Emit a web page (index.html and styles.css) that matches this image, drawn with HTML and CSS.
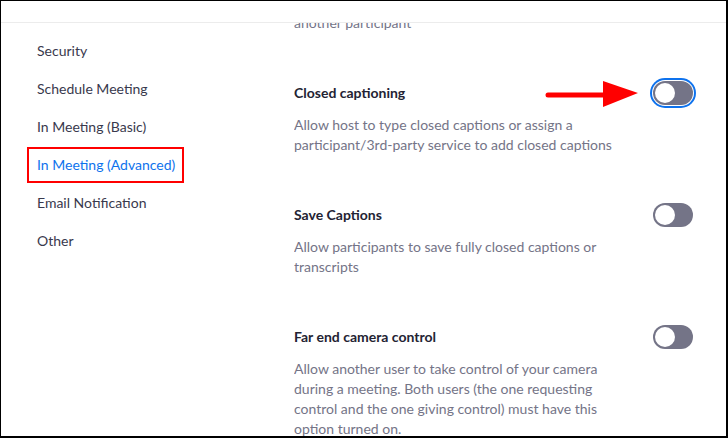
FILE: index.html
```html
<!DOCTYPE html>
<html lang="en">
<head>
<meta charset="utf-8">
<title>Settings</title>
<link rel="stylesheet" href="styles.css">
</head>
<body>
<div class="frame">
  <div class="topbar"></div>
  <div class="layout">
    <nav class="sidebar">
      <a class="nav-item">Security</a>
      <a class="nav-item">Schedule Meeting</a>
      <a class="nav-item">In Meeting (Basic)</a>
      <a class="nav-item active">In Meeting (Advanced)</a>
      <a class="nav-item">Email Notification</a>
      <a class="nav-item">Other</a>
    </nav>
    <main class="content">
      <p class="desc cut">another participant</p>
      <section class="setting">
        <div class="setting-head">
          <h3 class="title">Closed captioning</h3>
          <span class="toggle focused"><span class="knob"></span></span>
        </div>
        <p class="desc">Allow host to type closed captions or assign a participant/3rd-party service to add closed captions</p>
      </section>
      <section class="setting">
        <div class="setting-head">
          <h3 class="title">Save Captions</h3>
          <span class="toggle"><span class="knob"></span></span>
        </div>
        <p class="desc">Allow participants to save fully closed captions or transcripts</p>
      </section>
      <section class="setting">
        <div class="setting-head">
          <h3 class="title">Far end camera control</h3>
          <span class="toggle"><span class="knob"></span></span>
        </div>
        <p class="desc">Allow another user to take control of your camera during a meeting. Both users (the one requesting control and the one giving control) must have this option turned on.</p>
      </section>
    </main>
  </div>
  <svg class="arrow" width="100" height="36" viewBox="0 0 100 36">
    <line x1="8" y1="19" x2="66" y2="19" stroke="#ff0000" stroke-width="5" stroke-linecap="round"/>
    <polygon points="63,5 98,17 63,31" fill="#ff0000"/>
  </svg>
</div>
</body>
</html>
```

FILE: styles.css
```css
* { box-sizing: border-box; }
html, body { margin: 0; padding: 0; background: #fff; }
body {
  font-family: Lato, "Open Sans", sans-serif;
  font-size: 14px;
}
.frame {
  position: relative;
  width: 728px;
  height: 438px;
  border-style: solid;
  border-color: #000;
  border-width: 1px 2px 2px 1px;
  display: flex;
  flex-direction: column;
  overflow: hidden;
}
.topbar {
  height: 22px;
  flex: none;
  border-bottom: 1px solid #ececec;
  background: #fff;
  position: relative;
  z-index: 1;
}
.layout {
  flex: 1;
  display: flex;
  min-height: 0;
}
.sidebar {
  width: 293px;
  flex: none;
  padding: 10px 0 0 26px;
  display: flex;
  flex-direction: column;
  align-items: flex-start;
  gap: 2px;
}
.nav-item {
  display: block;
  padding: 6px 7px 6px 8px;
  line-height: 20px;
  border: 2px solid transparent;
  color: #39394d;
  text-decoration: none;
}
.nav-item.active {
  color: #0e72ed;
  border-color: #ff0000;
}
.content {
  flex: 1;
  padding-right: 33px;
  overflow: hidden;
}
.desc {
  margin: 0;
  width: 322px;
  line-height: 20px;
  color: #747487;
}
.desc.cut {
  margin-top: -10px;
  margin-bottom: 50px;
}
.setting { margin-bottom: 50px; }
.setting-head {
  display: flex;
  align-items: center;
  justify-content: space-between;
  height: 20px;
  margin-bottom: 12px;
}
.title {
  margin: 0;
  font-size: 14px;
  font-weight: 700;
  line-height: 20px;
  color: #232333;
}
.toggle {
  width: 40px;
  height: 24px;
  border-radius: 12px;
  background: #747487;
  padding: 2px;
  display: flex;
  align-items: center;
}
.toggle.focused {
  box-shadow: 0 0 0 1px #fff, 0 0 0 3px #0e72ed;
}
.knob {
  width: 20px;
  height: 20px;
  border-radius: 50%;
  background: #fff;
}
.arrow {
  position: absolute;
  left: 539px;
  top: 75px;
}
```
